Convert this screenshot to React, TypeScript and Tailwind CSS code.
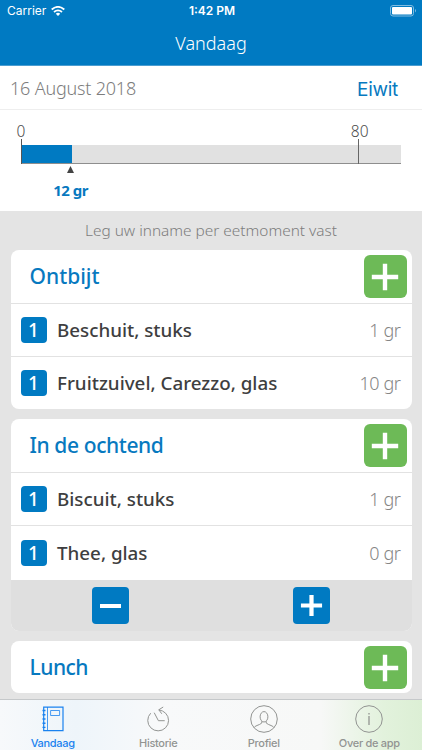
import React from "react";

const sans = "font-['Noto_Sans',sans-serif]";
const system = "font-[Inter,sans-serif]";

function Plus({ className, weight, arm }: { className: string; weight: number; arm: number }) {
  return (
    <svg viewBox="0 0 42 42" className={className} stroke="white" strokeWidth={weight}>
      <path d={`M${21 - arm} 21H${21 + arm}M21 ${21 - arm}V${21 + arm}`} />
    </svg>
  );
}

function AddButton() {
  return (
    <button className="flex size-[43px] items-center justify-center rounded-[6px] bg-[#6dba57]">
      <Plus className="size-[42px]" weight={4.4} arm={13.2} />
    </button>
  );
}

function CardHeader({ title, tracking }: { title: string; tracking: string }) {
  return (
    <div className="flex h-[53px] items-center justify-between pl-[19px] pr-[5px]">
      <h2 className={`text-[21px] font-medium leading-none text-[#0779bf] ${tracking}`}>{title}</h2>
      <AddButton />
    </div>
  );
}

function Row({ name, grams, height = "h-[53px]" }: { name: string; grams: string; height?: string }) {
  return (
    <div className={`flex items-center border-t border-[#e2e2e2] pl-[10px] pr-[11px] ${height}`}>
      <span className="flex size-[26px] items-center justify-center rounded-[4px] bg-[#007ac2] text-[19px] font-medium leading-none text-white">1</span>
      <span className="ml-[10.5px] flex-1 whitespace-nowrap text-[18.8px] font-medium leading-none text-[#3e3e40]">{name}</span>
      <span className="text-[18px] font-light leading-none tracking-[-0.4px] text-[#858585]">{grams}</span>
    </div>
  );
}

function Tab({ label, active, children }: { label: string; active?: boolean; children: React.ReactNode }) {
  return (
    <div className={`flex flex-1 flex-col items-center ${active ? "text-[#1a82ef]" : "text-[#929492]"}`}>
      <svg viewBox="0 0 30 30" className="mt-[4px] size-[30px]" fill="none" stroke="currentColor" strokeWidth="1">
        {children}
      </svg>
      <span className={`mt-[2px] whitespace-nowrap text-[11px] font-medium leading-[14px] tracking-[-0.3px] ${system}`}>{label}</span>
    </div>
  );
}

export default function App() {
  return (
    <div className={`flex h-[750px] w-[422px] flex-col overflow-hidden bg-[#e4e4e4] ${sans}`}>
      <header className="h-[66px] shrink-0 border-b border-[#4a9dd1] bg-[#007ac2] text-white">
        <div className={`grid h-[22px] grid-cols-3 items-center pl-[7px] pr-[5px] text-[12px] leading-none ${system}`}>
          <div className="flex items-center gap-[5px]">
            <span>Carrier</span>
            <svg viewBox="0 0 14 10" className="h-[10px] w-[14px]" fill="none" stroke="white" strokeWidth="1.8">
              <path d="M.7 3.5Q7-1.8 13.3 3.5M3 6Q7 2.7 11 6" />
              <path d="M7 10L4.8 7.7Q7 6 9.2 7.7Z" fill="white" stroke="none" />
            </svg>
          </div>
          <span className="text-center font-semibold">1:42 PM</span>
          <svg viewBox="0 0 27 12" className="h-[12px] w-[27px] justify-self-end">
            <rect x=".5" y=".5" width="23" height="10.5" rx="2.5" fill="none" stroke="#80bce1" />
            <rect x="2" y="2" width="20" height="7.5" rx="1" fill="white" />
            <path d="M25 4Q27 5.7 25 7.4Z" fill="#80bce1" />
          </svg>
        </div>
        <h1 className="pt-[10px] text-center text-[18px] font-light leading-[22px]">Vandaag</h1>
      </header>

      <section className="h-[145px] shrink-0 bg-white">
        <div className="flex h-[44px] items-center justify-between border-b border-[#eeeeee] pl-[10px] pr-[24px]">
          <span className="text-[18px] font-light leading-none tracking-[-0.2px] text-[#7d7d7d]">16 August 2018</span>
          <span className={`pt-[3px] text-[19px] leading-none tracking-[-0.3px] text-[#0779bf] ${system}`}>Eiwit</span>
        </div>
        <div className="flex h-[29px] items-end justify-between pl-[16.5px] pr-[53.5px] text-[15.5px] font-light leading-[16px] text-[#4d4d4d]">
          <span>0</span>
          <span>80</span>
        </div>
        <div className="relative ml-[21px] mt-[6px] flex h-[19px] w-[380px] border-b border-[#8e8e8e] bg-[#e1e1e1]">
          <div className="w-[50.5px] bg-[#007ac2]" />
          <div className="absolute -top-[6px] left-0 h-[25px] w-px bg-[#555]" />
          <div className="absolute -top-[6px] left-[337px] h-[25px] w-px bg-[#666]" />
        </div>
        <div className="ml-[35.5px] flex w-[70px] flex-col items-center">
          <svg viewBox="0 0 7 7" className="mt-[2px] size-[7px]"><path d="M3.5 0L7 7H0Z" fill="#444" /></svg>
          <span className="mt-[9px] text-[15px] font-bold leading-[17px] tracking-[-0.5px] text-[#0779bf]">12 gr</span>
        </div>
      </section>

      <p className="h-[39px] shrink-0 text-center text-[15.4px] font-light leading-[39px] text-[#7d7d7d]">Leg uw inname per eetmoment vast</p>

      <main className="flex shrink-0 flex-col gap-[10px] px-[10.5px]">
        <section className="overflow-hidden rounded-[8px] bg-white">
          <CardHeader title="Ontbijt" tracking="tracking-normal" />
          <Row name="Beschuit, stuks" grams="1 gr" />
          <Row name="Fruitzuivel, Carezzo, glas" grams="10 gr" />
        </section>
        <section className="overflow-hidden rounded-[8px] bg-white">
          <CardHeader title="In de ochtend" tracking="tracking-[-0.4px]" />
          <Row name="Biscuit, stuks" grams="1 gr" />
          <Row name="Thee, glas" grams="0 gr" height="h-[55px]" />
          <div className="flex h-[51px] items-center justify-around bg-[#dfdfdf]">
            <button className="flex size-[37px] items-center justify-center rounded-[4px] bg-[#007ac2]">
              <span className="h-[4px] w-[21px] bg-white" />
            </button>
            <button className="flex size-[37px] items-center justify-center rounded-[4px] bg-[#007ac2]">
              <Plus className="size-[37px]" weight={4.8} arm={12} />
            </button>
          </div>
        </section>
        <section className="h-[52px] overflow-hidden rounded-[8px] bg-white">
          <CardHeader title="Lunch" tracking="tracking-[-0.5px]" />
        </section>
      </main>

      <nav className="mt-auto flex h-[51px] shrink-0 border-t border-[#c5c8ca] bg-[linear-gradient(90deg,#f7f9fb_0%,#eef5fa_18%,#f8f9fa_38%,#f7f8f7_76%,#e2f2dc_91%,#dcefd5_100%)]">
        <Tab label="Vandaag" active>
          <path d="M5.7 3.2H25V26.7H5.7Z" strokeWidth="1.2" />
          <path d="M9.5 3V26.5M12.6 6.5H21.6V11.5H12.6Z" strokeWidth="0.8" />
          <path d="M4.5 6.5H7.5M4.5 10.8H7.5M4.5 15H7.5M4.5 19.2H7.5M4.5 23.4H7.5" strokeWidth="1.4" />
        </Tab>
        <Tab label="Historie">
          <path d="M7.7 9.2A10.4 10.4 0 1 0 22.6 9.2Q20 6.6 15.8 5.8M20.2 3L15.8 5.8L18.8 9.8M11.2 8.7L15.4 16.7H21.7" />
        </Tab>
        <Tab label="Profiel">
          <circle cx="15" cy="15" r="13.3" />
          <ellipse cx="15" cy="12.8" rx="3.9" ry="5.2" />
          <path d="M12.8 17.2V19Q11 20.5 8 21.5Q5.8 22.2 5 23.7M17.2 17.2V19Q19 20.5 22 21.5Q24.2 22.2 25 23.7" />
        </Tab>
        <Tab label="Over de app">
          <circle cx="15" cy="15" r="13.3" />
          <path d="M15 12V21M15 9V10.5" strokeWidth="1.3" />
        </Tab>
      </nav>
    </div>
  );
}
